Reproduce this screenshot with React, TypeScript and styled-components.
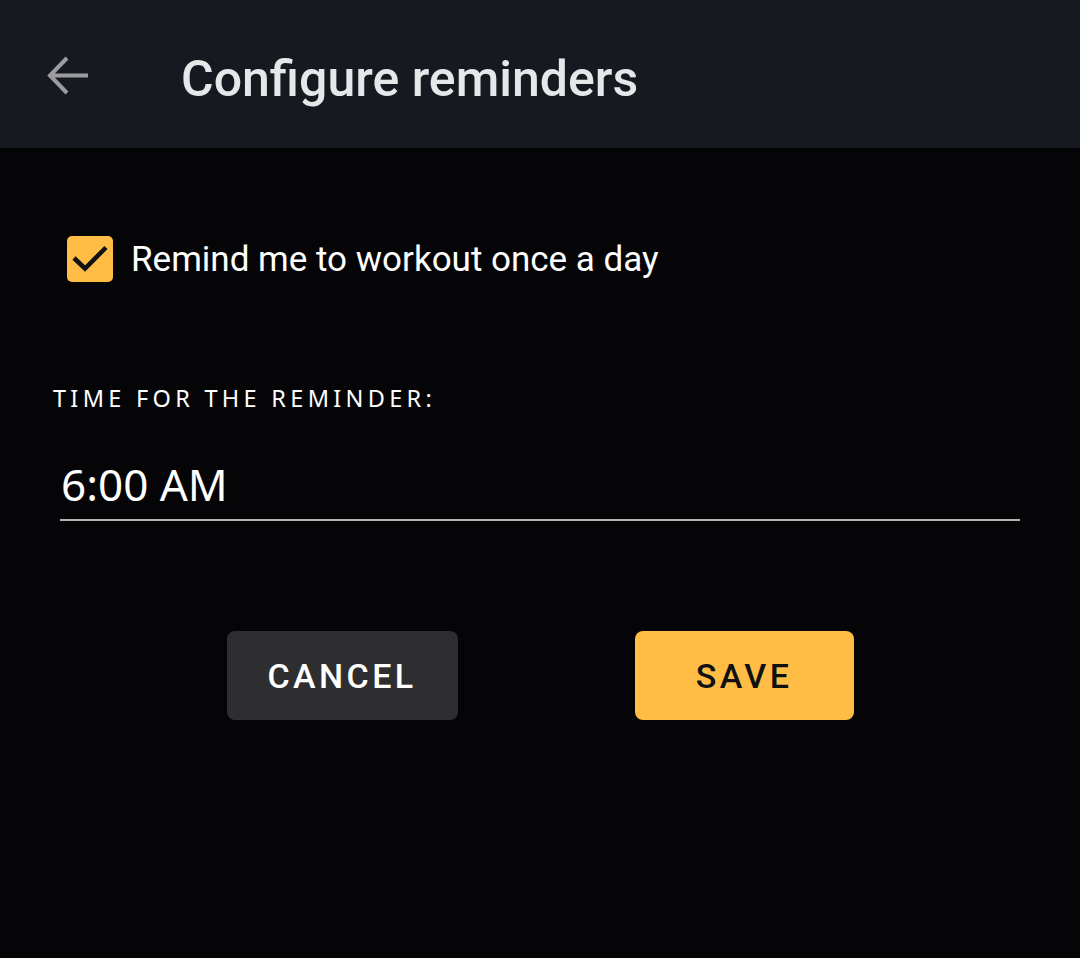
import React from "react";
import styled, { createGlobalStyle } from "styled-components";

const Global = createGlobalStyle`
  html, body { margin: 0; padding: 0; background: #050507; }
  body { font-family: Roboto, "Noto Sans", sans-serif; }
  #root { min-height: 958px; }
`;

const Page = styled.div`
  width: 1080px;
  min-height: 958px;
  background: #050507;
  display: flex;
  flex-direction: column;
`;

const Header = styled.header`
  height: 148px;
  background: #161a20;
  display: flex;
  align-items: center;
  padding-left: 46px;
  padding-top: 8px;
  box-sizing: border-box;
`;

const BackButton = styled.button`
  width: 44px;
  height: 44px;
  padding: 0;
  border: 0;
  background: none;
  display: flex;
  align-items: center;
  justify-content: center;
  margin-right: 91px;
  margin-top: -2px;
`;

const Title = styled.h1`
  margin: 0;
  font-family: Roboto, sans-serif;
  font-weight: 500;
  font-size: 50px;
  color: #e6e7e9;
  letter-spacing: 0px;
  margin-top: 2px;
`;

const Content = styled.main`
  display: flex;
  flex-direction: column;
  padding: 88px 60px 0 60px;
`;

const CheckRow = styled.label`
  display: flex;
  align-items: center;
  gap: 18px;
  padding-left: 7px;
`;

const CheckBox = styled.span`
  width: 46px;
  height: 46px;
  border-radius: 5px;
  background: #ffbd45;
  display: flex;
  align-items: center;
  justify-content: center;
`;

const CheckLabel = styled.span`
  font-family: Roboto, sans-serif;
  font-size: 35px;
  color: #ffffff;
`;

const FieldLabel = styled.div`
  margin-top: 100px;
  margin-left: -7px;
  font-family: "Noto Sans", sans-serif;
  font-size: 23.5px;
  letter-spacing: 4.3px;
  color: #ffffff;
`;

const TimeField = styled.div`
  margin-top: 42px;
  padding: 0 0 7px 1px;
  border-bottom: 2px solid #b4b4b4;
  font-family: "Noto Sans", sans-serif;
  font-size: 44px;
  color: #ffffff;
  line-height: 56px;
`;

const ButtonRow = styled.div`
  display: flex;
  justify-content: center;
  gap: 177px;
  margin-top: 110px;
  margin-left: -60px;
  margin-right: -60px;
`;

const Button = styled.button<{ $primary?: boolean }>`
  height: 89px;
  width: ${(p) => (p.$primary ? "219px" : "231px")};
  border: 0;
  border-radius: 8px;
  background: ${(p) => (p.$primary ? "#ffbd45" : "#2e2e30")};
  color: ${(p) => (p.$primary ? "#111111" : "#ffffff")};
  font-family: Roboto, sans-serif;
  font-weight: 500;
  font-size: 34px;
  letter-spacing: 3.4px;
  padding: 0;
`;

export default function App() {
  return (
    <Page>
      <Global />
      <Header>
        <BackButton aria-label="Back">
          <svg width="44" height="44" viewBox="0 0 44 44">
            <path
              d="M42 20.5 H7 M21 3 L4 20.5 L21 38"
              fill="none"
              stroke="#9c9c9e"
              strokeWidth="4"
            />
          </svg>
        </BackButton>
        <Title>Configure reminders</Title>
      </Header>
      <Content>
        <CheckRow>
          <CheckBox>
            <svg width="46" height="46" viewBox="0 0 46 46">
              <path
                d="M7 22 L18 32.5 L39 11.5"
                fill="none"
                stroke="#111"
                strokeWidth="4.5"
              />
            </svg>
          </CheckBox>
          <CheckLabel>Remind me to workout once a day</CheckLabel>
        </CheckRow>
        <FieldLabel>TIME FOR THE REMINDER:</FieldLabel>
        <TimeField>6:00 AM</TimeField>
        <ButtonRow>
          <Button>CANCEL</Button>
          <Button $primary>SAVE</Button>
        </ButtonRow>
      </Content>
    </Page>
  );
}
